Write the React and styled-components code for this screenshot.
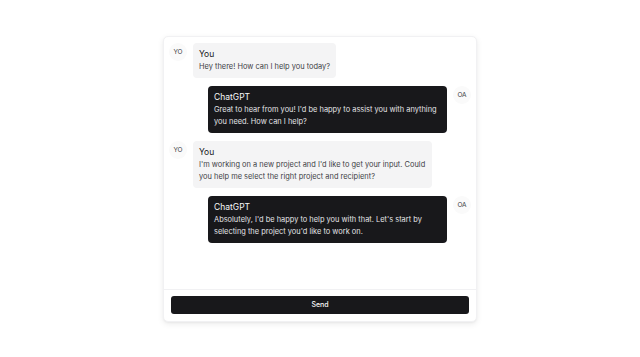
import React from 'react';
import styled, { createGlobalStyle } from 'styled-components';

const GlobalStyle = createGlobalStyle`
  html, body {
    margin: 0;
    padding: 0;
    background: #ffffff;
  }
  body {
    font-family: Inter, "Liberation Sans", sans-serif;
    -webkit-font-smoothing: antialiased;
  }
`;

const Page = styled.div`
  width: 100vw;
  height: 100vh;
  display: flex;
  align-items: center;
  justify-content: center;
`;

const Card = styled.div`
  width: 314px;
  height: 286px;
  display: flex;
  flex-direction: column;
  background: #ffffff;
  border: 1px solid #f1f1f3;
  border-radius: 5px;
  box-shadow: 0 2px 6px rgba(0, 0, 0, 0.08), 0 1px 2px rgba(0, 0, 0, 0.04);
  box-sizing: border-box;
`;

const Messages = styled.div`
  flex: 1;
  display: flex;
  flex-direction: column;
  gap: 8px;
  padding: 6px 5px;
  overflow: hidden;
`;

const Row = styled.div`
  display: flex;
  align-items: flex-start;
  gap: 6px;
  flex-direction: ${(props) => (props.$mine ? 'row' : 'row-reverse')};
`;

const Avatar = styled.div`
  flex: none;
  width: 18px;
  height: 18px;
  border-radius: 50%;
  background: #fafafa;
  color: #3f3f46;
  font-size: 6.5px;
  display: flex;
  align-items: center;
  justify-content: center;
`;

const Bubble = styled.div`
  max-width: 239px;
  box-sizing: border-box;
  padding: 5px 6px;
  border-radius: 4px;
  background: ${(props) => (props.$mine ? '#f4f4f5' : '#18181b')};
  color: ${(props) => (props.$mine ? '#3f3f46' : '#e4e4e7')};
`;

const Name = styled.div`
  font-size: 8.5px;
  line-height: 12px;
  font-weight: 400;
  margin-bottom: 1px;
  color: ${(props) => (props.$mine ? '#18181b' : '#fafafa')};
`;

const Text = styled.div`
  font-size: 7.45px;
  line-height: 12px;
`;

const Footer = styled.div`
  flex: none;
  border-top: 1px solid #f1f1f3;
  padding: 6px 7px 7px;
`;

const SendButton = styled.button`
  display: block;
  width: 100%;
  height: 18px;
  border: none;
  border-radius: 3px;
  background: #18181b;
  color: #fafafa;
  font-family: inherit;
  font-size: 7px;
  font-weight: 500;
  cursor: pointer;
`;

const messages = [
  { id: 1, mine: true, name: 'You', text: 'Hey there! How can I help you today?' },
  {
    id: 2,
    mine: false,
    name: 'ChatGPT',
    text: "Great to hear from you! I'd be happy to assist you with anything you need. How can I help?",
  },
  {
    id: 3,
    mine: true,
    name: 'You',
    text: "I'm working on a new project and I'd like to get your input. Could you help me select the right project and recipient?",
  },
  {
    id: 4,
    mine: false,
    name: 'ChatGPT',
    text: "Absolutely, I'd be happy to help you with that. Let's start by selecting the project you'd like to work on.",
  },
];

const App = () => {
  return (
    <Page>
      <GlobalStyle />
      <Card>
        <Messages>
          {messages.map((m) => (
            <Row key={m.id} $mine={m.mine}>
              <Avatar>{m.mine ? 'YO' : 'OA'}</Avatar>
              <Bubble $mine={m.mine}>
                <Name $mine={m.mine}>{m.name}</Name>
                <Text>{m.text}</Text>
              </Bubble>
            </Row>
          ))}
        </Messages>
        <Footer>
          <SendButton>Send</SendButton>
        </Footer>
      </Card>
    </Page>
  );
};

export default App;
